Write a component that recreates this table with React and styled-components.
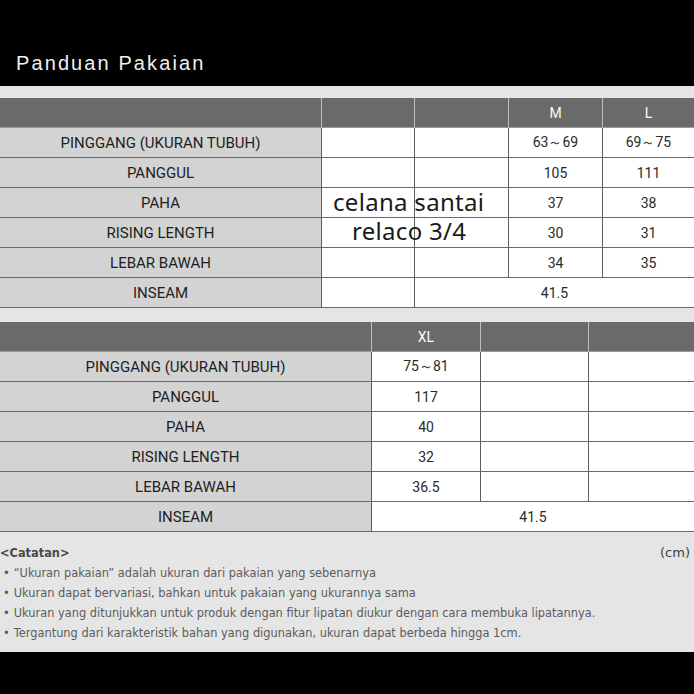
import React from "react";
import styled, { createGlobalStyle } from "styled-components";

const Global = createGlobalStyle`
  * { box-sizing: border-box; }
  body {
    margin: 0;
    background: #000;
    font-family: Roboto, "Liberation Sans", Arial, sans-serif;
  }
`;

const Page = styled.div`
  width: 694px;
  height: 694px;
  overflow: hidden;
  background: #000;
`;

const TopBar = styled.div`
  height: 86px;
  display: flex;
  align-items: flex-end;
  padding: 0 0 11px 16px;
`;

const Title = styled.h1`
  margin: 0;
  font-family: "Liberation Sans", Arial, sans-serif;
  font-size: 20px;
  font-weight: 400;
  letter-spacing: 2.1px;
  color: #efefef;
`;

const Sheet = styled.div`
  background: #e5e5e5;
  padding-top: 12px;
`;

const Tables = styled.div`
  display: flex;
  flex-direction: column;
  gap: 14px;
`;

const TableWrap = styled.div`
  position: relative;
`;

const Grid = styled.div`
  display: grid;
  grid-template-columns: ${(p) => p.$cols};
  grid-auto-rows: 30px;
`;

const HeadCell = styled.div`
  background: #6a6a6a;
  color: #fafafa;
  font-size: 14px;
  display: flex;
  align-items: center;
  justify-content: center;
  border-left: ${(p) => (p.$first ? "none" : "1px solid #bdbdbd")};
  border-bottom: 1px solid #9a9a9a;
`;

const LabelCell = styled.div`
  background: #d3d3d3;
  color: #1e1e1e;
  font-size: 15px;
  display: flex;
  align-items: center;
  justify-content: center;
  border-bottom: 1px solid #6a6a6a;
`;

const DataCell = styled.div`
  background: #fff;
  color: #2a2a2a;
  font-size: 14px;
  display: flex;
  align-items: center;
  justify-content: center;
  border-left: 1px solid #5e5e5e;
  border-bottom: 1px solid #6a6a6a;
  grid-column: ${(p) => (p.$span ? `span ${p.$span}` : "auto")};
`;

const Scribble = styled.div`
  position: absolute;
  left: ${(p) => p.$left}px;
  top: ${(p) => p.$top}px;
  font-family: "Noto Sans", sans-serif;
  font-size: 24px;
  line-height: 1;
  color: #1a1a1a;
  letter-spacing: 0.3px;
  white-space: nowrap;
`;

const Notes = styled.div`
  padding: 11px 4px 9px 0;
  font-family: "DejaVu Sans", sans-serif;
  font-size: 11.4px;
  line-height: 20px;
  color: #5c5c5c;
`;

const NotesHead = styled.div`
  display: flex;
  justify-content: space-between;
  align-items: center;
  height: 20px;
`;

const NotesTitle = styled.span`
  font-weight: 700;
  color: #4a4a4a;
`;

const Unit = styled.span`
  font-size: 13px;
  color: #3e3e3e;
`;

const Bullet = styled.div`
  padding-left: 3px;
  white-space: nowrap;
  &::before {
    content: "•";
    margin-right: 4px;
  }
`;

const table1 = [
  ["PINGGANG (UKURAN TUBUH)", "63～69", "69～75"],
  ["PANGGUL", "105", "111"],
  ["PAHA", "37", "38"],
  ["RISING LENGTH", "30", "31"],
  ["LEBAR BAWAH", "34", "35"],
];

const table2 = [
  ["PINGGANG (UKURAN TUBUH)", "75～81"],
  ["PANGGUL", "117"],
  ["PAHA", "40"],
  ["RISING LENGTH", "32"],
  ["LEBAR BAWAH", "36.5"],
];

const notes = [
  "\u201CUkuran pakaian\u201D adalah ukuran dari pakaian yang sebenarnya",
  "Ukuran dapat bervariasi, bahkan untuk pakaian yang ukurannya sama",
  "Ukuran yang ditunjukkan untuk produk dengan fitur lipatan diukur dengan cara membuka lipatannya.",
  "Tergantung dari karakteristik bahan yang digunakan, ukuran dapat berbeda hingga 1cm.",
];

export default function App() {
  return (
    <Page>
      <Global />
      <TopBar>
        <Title>Panduan Pakaian</Title>
      </TopBar>
      <Sheet>
        <Tables>
          <TableWrap>
            <Grid $cols="321px 93px 94px 94px 1fr">
              <HeadCell $first />
              <HeadCell />
              <HeadCell />
              <HeadCell>M</HeadCell>
              <HeadCell>L</HeadCell>
              {table1.map(([label, m, l]) => (
                <React.Fragment key={label}>
                  <LabelCell>{label}</LabelCell>
                  <DataCell />
                  <DataCell />
                  <DataCell>{m}</DataCell>
                  <DataCell>{l}</DataCell>
                </React.Fragment>
              ))}
              <LabelCell>INSEAM</LabelCell>
              <DataCell />
              <DataCell $span={3}>41.5</DataCell>
            </Grid>
            <Scribble $left={333} $top={92}>celana santai</Scribble>
            <Scribble $left={352} $top={121}>relaco 3/4</Scribble>
          </TableWrap>
          <TableWrap>
            <Grid $cols="371px 109px 108px 1fr">
              <HeadCell $first />
              <HeadCell>XL</HeadCell>
              <HeadCell />
              <HeadCell />
              {table2.map(([label, xl]) => (
                <React.Fragment key={label}>
                  <LabelCell>{label}</LabelCell>
                  <DataCell>{xl}</DataCell>
                  <DataCell />
                  <DataCell />
                </React.Fragment>
              ))}
              <LabelCell>INSEAM</LabelCell>
              <DataCell $span={3}>41.5</DataCell>
            </Grid>
          </TableWrap>
        </Tables>
        <Notes>
          <NotesHead>
            <NotesTitle>&lt;Catatan&gt;</NotesTitle>
            <Unit>(cm)</Unit>
          </NotesHead>
          {notes.map((n) => (
            <Bullet key={n}>{n}</Bullet>
          ))}
        </Notes>
      </Sheet>
    </Page>
  );
}
